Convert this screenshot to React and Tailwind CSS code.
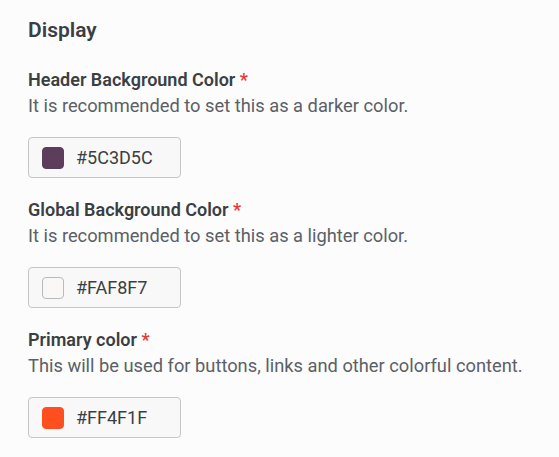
import React from 'react';

const fields = [
  {
    label: 'Header Background Color',
    hint: 'It is recommended to set this as a darker color.',
    value: '#5C3D5C',
    swatch: 'bg-[#5c3d5c] border-[#5c3d5c]',
  },
  {
    label: 'Global Background Color',
    hint: 'It is recommended to set this as a lighter color.',
    value: '#FAF8F7',
    swatch: 'bg-[#faf8f7] border-[#b9b9b9]',
  },
  {
    label: 'Primary color',
    hint: 'This will be used for buttons, links and other colorful content.',
    value: '#FF4F1F',
    swatch: 'bg-[#ff4f1f] border-[#ff4f1f]',
  },
];

const ColorField = ({ field }) => (
  <div className="mt-[27px] [&+&]:mt-[21px]">
    <div className="text-[18px] leading-[22px] font-semibold text-[#3a3f44]">
      {field.label} <span className="text-[#e53935]">*</span>
    </div>
    <p className="mt-[4px] text-[18.3px] leading-[22px] text-[#5b6067]">{field.hint}</p>
    <div className="mt-[20px] w-[153px] h-[41px] flex items-center gap-[12px] px-[13px] rounded-[4px] border border-[#c4c6c8] bg-[#f8f8f8]">
      <span className={`w-[22px] h-[22px] rounded-[4px] border ${field.swatch}`} />
      <span className="text-[18px] text-[#3a3f44]">{field.value}</span>
    </div>
  </div>
);

export default function App() {
  return (
    <div className="min-h-screen bg-[#fcfcfc] pt-[18px] px-[28px] font-['Roboto',sans-serif]">
      <h2 className="text-[21px] leading-6 font-semibold text-[#3a3f44]">Display</h2>
      {fields.map((f) => (
        <ColorField key={f.label} field={f} />
      ))}
    </div>
  );
}
